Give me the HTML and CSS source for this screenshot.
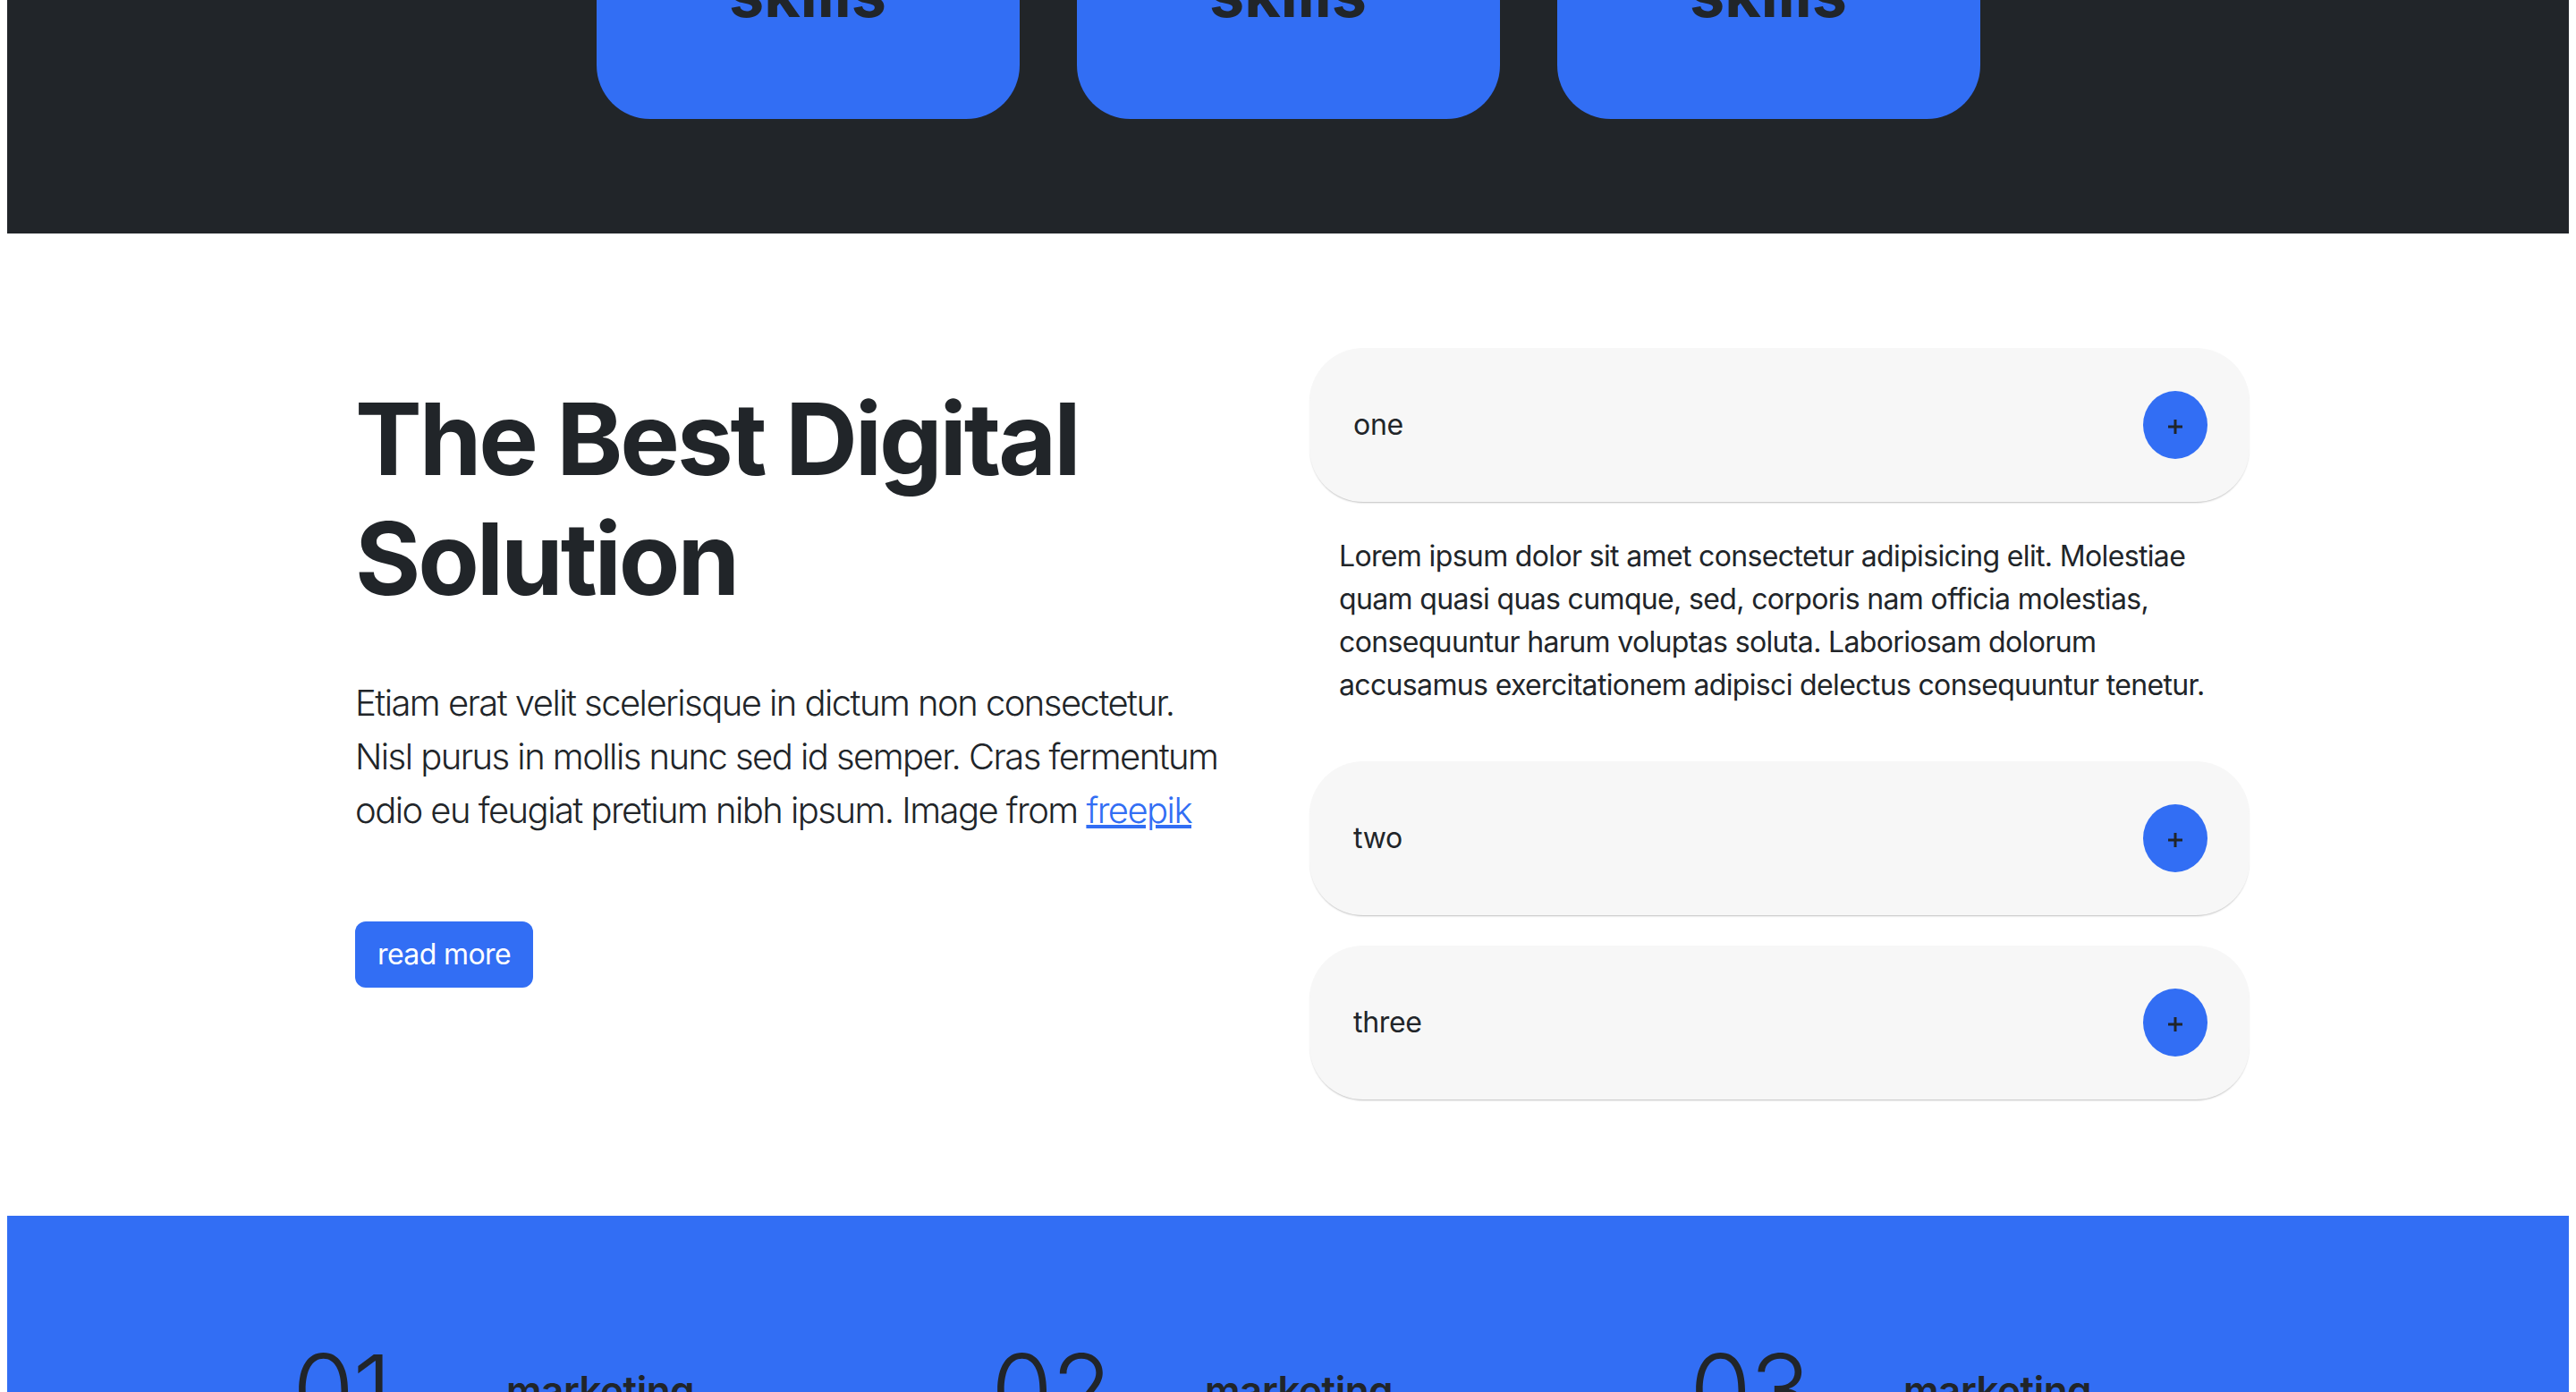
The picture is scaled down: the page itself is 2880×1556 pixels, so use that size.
FILE: index.html
```html
<!DOCTYPE html>
<html lang="en">
<head>
<meta charset="utf-8">
<title>Digital Solution</title>
<link rel="stylesheet" href="styles.css">
</head>
<body>
<section class="skills">
  <div class="skills-row">
    <div class="skill-card"><h3 class="skill-title">skills</h3></div>
    <div class="skill-card"><h3 class="skill-title">skills</h3></div>
    <div class="skill-card"><h3 class="skill-title">skills</h3></div>
  </div>
</section>

<section class="about">
  <div class="about-inner">
    <div class="about-text">
      <h1 class="about-title">The Best Digital Solution</h1>
      <p class="lead">Etiam erat velit scelerisque in dictum non consectetur. Nisl purus in mollis nunc sed id semper. Cras fermentum odio eu feugiat pretium nibh ipsum. Image from <a class="lead-link" href="#">freepik</a></p>
      <a class="btn-primary" href="#">read more</a>
    </div>
    <div class="accordion">
      <div class="acc-item">
        <span class="acc-label">one</span>
        <button class="acc-toggle" type="button"><svg class="plus" width="18" height="18" viewBox="0 0 18 18"><path d="M9 1v16M1 9h16"/></svg></button>
      </div>
      <div class="acc-body">Lorem ipsum dolor sit amet consectetur adipisicing elit. Molestiae quam quasi quas cumque, sed, corporis nam officia molestias, consequuntur harum voluptas soluta. Laboriosam dolorum accusamus exercitationem adipisci delectus consequuntur tenetur.</div>
      <div class="acc-item">
        <span class="acc-label">two</span>
        <button class="acc-toggle" type="button"><svg class="plus" width="18" height="18" viewBox="0 0 18 18"><path d="M9 1v16M1 9h16"/></svg></button>
      </div>
      <div class="acc-item">
        <span class="acc-label">three</span>
        <button class="acc-toggle" type="button"><svg class="plus" width="18" height="18" viewBox="0 0 18 18"><path d="M9 1v16M1 9h16"/></svg></button>
      </div>
    </div>
  </div>
</section>

<section class="steps">
  <div class="steps-row">
    <div class="step"><span class="step-num">01</span><h4 class="step-title">marketing</h4></div>
    <div class="step"><span class="step-num">02</span><h4 class="step-title">marketing</h4></div>
    <div class="step"><span class="step-num">03</span><h4 class="step-title">marketing</h4></div>
  </div>
</section>
</body>
</html>
```

FILE: styles.css
```css
html, body {
  overflow: hidden;
}
body {
  margin: 0 8px;
  font-family: Inter, "Liberation Sans", sans-serif;
  font-size: 32px;
  line-height: 1.5;
  color: #212529;
  background: #fff;
}

/* skills (dark band) */
.skills {
  background: #212529;
  padding-bottom: 128px;
}
.skills-row {
  display: flex;
  justify-content: center;
  gap: 64px;
  margin-top: -112px;
}
.skill-card {
  width: 473px;
  background: #326ef4;
  border-radius: 60px;
  padding: 64px 0 97px;
  text-align: center;
}
.skill-title {
  margin: 0;
  font-size: 70px;
  line-height: 1.2;
  font-weight: 700;
  color: #212529;
}

/* about */
.about {
  padding: 128px 0 130px;
}
.about-inner {
  display: flex;
  align-items: flex-start;
  margin-left: 389px;
}
.about-text {
  width: 985px;
  padding-top: 34px;
}
.about-title {
  margin: 0 0 64px;
  font-size: 112px;
  line-height: 1.2;
  font-weight: 700;
  letter-spacing: -3.1px;
}
.lead {
  margin: 0 0 94px;
  font-size: 40px;
  font-weight: 300;
  line-height: 1.5;
  letter-spacing: -1.55px;
}
.lead-link {
  color: #326ef4;
  text-decoration: underline;
}
.btn-primary {
  display: inline-block;
  padding: 13px 25px;
  border-radius: 12px;
  background: #326ef4;
  color: #fff;
  font-size: 32px;
  line-height: 1.5;
  letter-spacing: -0.6px;
  text-decoration: none;
}

.accordion {
  margin-left: 82px;
  width: 1051px;
  display: flex;
  flex-direction: column;
  gap: 34px;
}
.acc-item {
  display: flex;
  align-items: center;
  justify-content: space-between;
  padding: 48px 47px 48px 49px;
  background: #f7f7f7;
  border-radius: 60px;
  box-shadow: 0 2px 2px -1px rgba(0, 0, 0, 0.25);
}
.acc-label {
  font-size: 32px;
  line-height: 1.5;
  letter-spacing: -0.3px;
}
.acc-toggle {
  width: 72px;
  height: 76px;
  border: 0;
  border-radius: 50%;
  background: #326ef4;
  padding: 0;
  display: flex;
  align-items: center;
  justify-content: center;
}
.plus {
  display: block;
  margin-top: 3px;
}
.plus path {
  stroke: #212529;
  stroke-width: 3;
  fill: none;
}
.acc-body {
  padding: 3px 32px 27px 33px;
  font-size: 32px;
  line-height: 1.5;
  letter-spacing: -0.65px;
}

/* steps (blue band) */
.steps {
  background: #326ef4;
  padding: 128px 0 200px;
}
.steps-row {
  display: grid;
  grid-template-columns: repeat(3, 781px);
  padding-left: 319px;
}
.step {
  display: flex;
  align-items: center;
}
.step-num {
  width: 239px;
  font-size: 112px;
  line-height: 1.2;
  font-weight: 300;
  letter-spacing: -2px;
}
.step-title {
  margin: 0;
  font-size: 44px;
  line-height: 1.2;
  font-weight: 600;
  letter-spacing: -0.5px;
}
```
